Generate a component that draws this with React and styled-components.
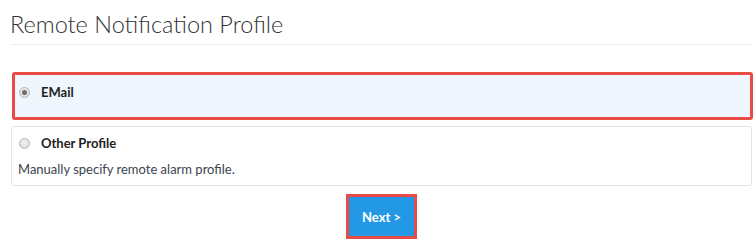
import React from "react";
import styled, { createGlobalStyle } from "styled-components";

const Global = createGlobalStyle`
  html, body { margin: 0; padding: 0; background: #fff; }
  body { font-family: Lato, "Open Sans", sans-serif; color: #333; }
  * { box-sizing: border-box; }
`;

const Page = styled.div`
  padding: 0 0 0 10px;
  width: 753px;
`;

const Title = styled.h1`
  margin: 0;
  padding: 12px 0 8px 0;
  font-family: Lato, sans-serif;
  font-weight: 300;
  font-size: 23.5px;
  line-height: 24px;
  color: #333;
  border-bottom: 1px solid #eeeeee;
`;

const Options = styled.div`
  display: flex;
  flex-direction: column;
  gap: 6px;
  margin-top: 27px;
`;

const Option = styled.div`
  display: flex;
  flex-direction: column;
  border-radius: 3px;
  background: ${(p) => (p.$selected ? "#eff6fe" : "#fff")};
  border: ${(p) => (p.$highlight ? "3px solid #e84a47" : "1px solid #e3e3e3")};
  margin: ${(p) => (p.$highlight ? "0 0 0 2px" : "0 1px 0 1px")};
  padding: ${(p) => (p.$highlight ? "8px 4px 16px 3px" : "7px 6px 7px 6px")};
`;

const LabelRow = styled.label`
  display: flex;
  align-items: center;
  gap: 11px;
  height: 18px;
  font-family: Lato, sans-serif;
  font-weight: 700;
  font-size: 13px;
  color: #222;
`;

const Radio = styled.span`
  width: 11px;
  height: 11px;
  border-radius: 50%;
  border: 1px solid #b5b5b5;
  background: radial-gradient(circle at 50% 40%, #f4f4f4, #d6d6d6);
  display: flex;
  align-items: center;
  justify-content: center;
  margin-left: 1px;
  &::after {
    content: "";
    display: ${(p) => (p.$checked ? "block" : "none")};
    width: 5px;
    height: 5px;
    border-radius: 50%;
    background: #6a6a6a;
  }
`;

const Description = styled.div`
  margin-top: 8px;
  font-family: Lato, sans-serif;
  font-size: 13px;
  line-height: 18px;
  color: #3a4450;
`;

const Actions = styled.div`
  display: flex;
  justify-content: center;
  margin-top: 8px;
`;

const Button = styled.button`
  width: 71px;
  height: 45px;
  border: 3px solid #e84a47;
  background: #2399e5;
  color: #fff;
  font-family: Lato, sans-serif;
  font-weight: 700;
  font-size: 13px;
  padding: 0;
  cursor: pointer;
`;

export default function App() {
  return (
    <>
      <Global />
      <Page>
        <Title>Remote Notification Profile</Title>
        <Options>
          <Option $selected $highlight>
            <LabelRow>
              <Radio $checked />
              EMail
            </LabelRow>
          </Option>
          <Option>
            <LabelRow>
              <Radio />
              Other Profile
            </LabelRow>
            <Description>Manually specify remote alarm profile.</Description>
          </Option>
        </Options>
        <Actions>
          <Button>Next &gt;</Button>
        </Actions>
      </Page>
    </>
  );
}
